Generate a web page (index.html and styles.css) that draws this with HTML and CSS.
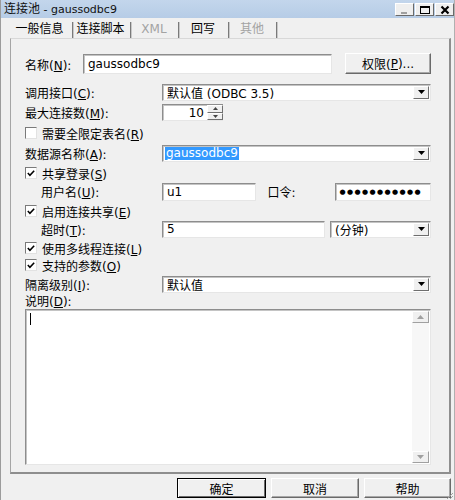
FILE: index.html
```html
<!DOCTYPE html>
<html>
<head>
<meta charset="utf-8">
<link rel="stylesheet" href="styles.css">
</head>
<body>
<div class="win">
  <div class="titlebar">
    <span class="title">连接池<span class="tl"> - gaussodbc9</span></span>
    <div class="wbtns">
      <span class="wbtn"><svg width="10" height="10" viewBox="0 0 10 10"><rect x="1" y="7" width="6" height="2" fill="#a0a0a0"/></svg></span>
      <span class="wbtn"><svg width="12" height="10" viewBox="0 0 12 10"><rect x="1.5" y="1.5" width="9" height="7" fill="none" stroke="#000" stroke-width="1"/><rect x="1" y="1" width="10" height="2" fill="#000"/></svg></span>
      <span class="wbtn"><svg width="10" height="10" viewBox="0 0 10 10"><path d="M1.5 1.5 L8.5 8.5 M8.5 1.5 L1.5 8.5" stroke="#000" stroke-width="2.2"/></svg></span>
    </div>
  </div>
  <div class="tabs">
    <span class="tab t1 sel">一般信息</span>
    <span class="tab t2">连接脚本</span>
    <span class="tab t3 dis">XML</span>
    <span class="tab t4">回写</span>
    <span class="tab t5 dis">其他</span>
  </div>
  <div class="panel">
    <div class="row r1">
      <span class="lbl lbl-short">名称(<u>N</u>):</span>
      <div class="field f-name">gaussodbc9</div>
      <div class="btn b-perm">权限(<u>P</u>)...</div>
    </div>
    <div class="row r2">
      <span class="lbl">调用接口(<u>C</u>):</span>
      <div class="field sel-box f-wide"><span class="val">默认值 (ODBC 3.5)</span><span class="dd"><svg width="7" height="4" viewBox="0 0 7 4"><path d="M0 0 H7 L3.5 4 Z" fill="#000"/></svg></span></div>
    </div>
    <div class="row r3">
      <span class="lbl">最大连接数(<u>M</u>):</span>
      <div class="spin">
        <div class="field f-spin">10</div>
        <div class="spin-btns">
          <span class="sbtn"><svg width="5" height="3" viewBox="0 0 5 3"><path d="M0 3 H5 L2.5 0 Z" fill="#444"/></svg></span>
          <span class="sbtn"><svg width="5" height="3" viewBox="0 0 5 3"><path d="M0 0 H5 L2.5 3 Z" fill="#444"/></svg></span>
        </div>
      </div>
    </div>
    <div class="row r4 chk-row">
      <span class="cb"></span><span class="ctext">需要全限定表名(<u>R</u>)</span>
    </div>
    <div class="row r5">
      <span class="lbl">数据源名称(<u>A</u>):</span>
      <div class="field sel-box f-wide"><span class="val"><span class="hl">gaussodbc9</span></span><span class="dd"><svg width="7" height="4" viewBox="0 0 7 4"><path d="M0 0 H7 L3.5 4 Z" fill="#000"/></svg></span></div>
    </div>
    <div class="row r6 chk-row">
      <span class="cb"><svg width="11" height="11" viewBox="0 0 11 11"><path d="M2 5 L4.3 7.5 L9 2.5" fill="none" stroke="#000" stroke-width="1.7"/></svg></span><span class="ctext">共享登录(<u>S</u>)</span>
    </div>
    <div class="row r7">
      <span class="lbl lbl-ind">用户名(<u>U</u>):</span>
      <div class="field f-user">u1</div>
      <span class="lbl-pw">口令:</span>
      <div class="field f-pw"><span class="dots">●●●●●●●●●●●</span></div>
    </div>
    <div class="row r8 chk-row">
      <span class="cb"><svg width="11" height="11" viewBox="0 0 11 11"><path d="M2 5 L4.3 7.5 L9 2.5" fill="none" stroke="#000" stroke-width="1.7"/></svg></span><span class="ctext">启用连接共享(<u>E</u>)</span>
    </div>
    <div class="row r9">
      <span class="lbl lbl-ind">超时(<u>T</u>):</span>
      <div class="field f-timeout">5</div>
      <div class="field sel-box f-unit"><span class="val">(分钟)</span><span class="dd"><svg width="7" height="4" viewBox="0 0 7 4"><path d="M0 0 H7 L3.5 4 Z" fill="#000"/></svg></span></div>
    </div>
    <div class="row r10 chk-row">
      <span class="cb"><svg width="11" height="11" viewBox="0 0 11 11"><path d="M2 5 L4.3 7.5 L9 2.5" fill="none" stroke="#000" stroke-width="1.7"/></svg></span><span class="ctext">使用多线程连接(<u>L</u>)</span>
    </div>
    <div class="row r11 chk-row">
      <span class="cb"><svg width="11" height="11" viewBox="0 0 11 11"><path d="M2 5 L4.3 7.5 L9 2.5" fill="none" stroke="#000" stroke-width="1.7"/></svg></span><span class="ctext">支持的参数(<u>O</u>)</span>
    </div>
    <div class="row r12">
      <span class="lbl">隔离级别(<u>I</u>):</span>
      <div class="field sel-box f-wide"><span class="val">默认值</span><span class="dd"><svg width="7" height="4" viewBox="0 0 7 4"><path d="M0 0 H7 L3.5 4 Z" fill="#000"/></svg></span></div>
    </div>
    <div class="row r13">
      <span class="lbl">说明(<u>D</u>):</span>
    </div>
    <div class="memo">
      <div class="memo-text"><span class="caret"></span></div>
      <div class="vsb">
        <span class="vbtn"><svg width="7" height="4" viewBox="0 0 7 4"><path d="M0 4 H7 L3.5 0 Z" fill="#a0a0a0"/></svg></span>
        <span class="vtrack"></span>
        <span class="vbtn"><svg width="7" height="4" viewBox="0 0 7 4"><path d="M0 0 H7 L3.5 4 Z" fill="#a0a0a0"/></svg></span>
      </div>
    </div>
  </div>
  <div class="footer">
    <div class="btn fb def">确定</div>
    <div class="btn fb b2">取消</div>
    <div class="btn fb b3">帮助</div>
  </div>
  <svg class="grip" width="10" height="10" viewBox="0 0 10 10"><path d="M9 3 L3 9 M9 6 L6 9" stroke="#a0a0a0" stroke-width="1"/></svg>
</div>
</body>
</html>
```

FILE: styles.css
```css
html, body {
  margin: 0;
  padding: 0;
  background: #f0f0f0;
}
.win {
  width: 455px;
  height: 500px;
  box-sizing: border-box;
  background: #f0f0f0;
  border-left: 1px solid #9c9c9c;
  border-right: 1px solid #b0b0b0;
  position: relative;
  overflow: hidden;
  font-family: "DejaVu Sans", "Noto Sans CJK SC", sans-serif;
  font-size: 12px;
  color: #000;
}
u { text-decoration: underline; text-underline-offset: 1px; }

.titlebar {
  height: 18px;
  background: linear-gradient(#c3d6ec, #b6cce6);
  display: flex;
  align-items: center;
  justify-content: space-between;
  margin-left: -1px;
  margin-right: -1px;
}
.title {
  padding-left: 4px;
  font-size: 12px;
  line-height: 18px;
  color: #111;
  white-space: nowrap;
}
.tl { font-size: 11px; }
.wbtns {
  display: flex;
  gap: 1px;
  padding-right: 1px;
  align-self: flex-start;
  margin-top: 3px;
}
.wbtn {
  width: 19px;
  height: 13px;
  box-sizing: border-box;
  background: #efefef;
  border-top: 1px solid #fff;
  border-left: 1px solid #fff;
  border-right: 1px solid #6a6a6a;
  border-bottom: 1px solid #6a6a6a;
  display: flex;
  align-items: center;
  justify-content: center;
}

.tabs {
  height: 20px;
  display: flex;
  align-items: flex-end;
  padding-left: 9px;
}
.tab {
  height: 16px;
  box-sizing: border-box;
  line-height: 15px;
  text-align: center;
  border-right: 1px solid #7a7a7a;
  box-shadow: 1px 0 0 #c8c8c8;
  padding-right: 3px;
  font-size: 12px;
}
.t1 { width: 63px; }
.t2 { width: 57px; margin-left: 1px; }
.t3 { width: 46px; margin-left: 2px; }
.t4 { width: 48px; margin-left: 2px; }
.t5 { width: 46px; margin-left: 2px; }
.tab.dis { color: #a3a3a3; }

.panel {
  margin-left: 9px;
  width: 441px;
  height: 436px;
  box-sizing: border-box;
  border-left: 1px solid #a5a5a5;
  border-top: 1px solid #d8d8d8;
  border-right: 2px solid #8e8e8e;
  border-bottom: 2px solid #8e8e8e;
  padding: 0 18px 0 14px;
}
.row {
  display: flex;
  align-items: center;
}
.r1 { margin-top: 14px; height: 22px; }
.r2 { margin-top: 8px; height: 18px; }
.r3 { margin-top: 2px; height: 19px; }
.r4 { margin-top: 3px; height: 16px; }
.r5 { margin-top: 3px; height: 18px; }
.r6 { margin-top: 3px; height: 16px; }
.r7 { margin-top: 1px; height: 19px; }
.r8 { margin-top: 2px; height: 16px; }
.r9 { margin-top: 1px; height: 18px; }
.r10 { margin-top: 2px; height: 16px; }
.r11 { margin-top: 1px; height: 16px; }
.r12 { margin-top: 2px; height: 18px; }
.r13 { margin-top: 0; height: 14px; }

.lbl {
  width: 137px;
  flex: none;
  white-space: nowrap;
}
.lbl-short { width: 58px; }
.lbl-ind { padding-left: 16px; width: 121px; }

.field {
  background: #fff;
  box-sizing: border-box;
  border-top: 1px solid #8d8d8d;
  border-left: 1px solid #8d8d8d;
  border-right: 1px solid #e6e6e6;
  border-bottom: 1px solid #e6e6e6;
  box-shadow: inset 1px 1px 0 #c4c4c4;
  display: flex;
  align-items: center;
  padding-left: 4px;
  white-space: nowrap;
  overflow: hidden;
}
.f-name { width: 249px; height: 20px; }
.f-wide { width: 269px; height: 17px; }
.f-user { width: 94px; height: 18px; }
.f-pw { width: 97px; height: 18px; }
.f-timeout { width: 163px; height: 17px; }
.f-unit { width: 101px; height: 17px; margin-left: 5px; }

.sel-box {
  justify-content: space-between;
  padding-right: 1px;
}
.val { display: flex; align-items: center; }
.hl {
  background: #3399ff;
  color: #fff;
  padding: 0 1px;
  line-height: 13px;
  margin-left: -2px;
}
.dd {
  width: 16px;
  height: 13px;
  box-sizing: border-box;
  background: #f0f0f0;
  border-top: 1px solid #fff;
  border-left: 1px solid #fff;
  border-right: 1px solid #6e6e6e;
  border-bottom: 1px solid #6e6e6e;
  display: flex;
  align-items: center;
  justify-content: center;
  flex: none;
}

.btn {
  box-sizing: border-box;
  background: #f0f0f0;
  border-top: 1px solid #fff;
  border-left: 1px solid #fff;
  border-right: 1px solid #6a6a6a;
  border-bottom: 1px solid #6a6a6a;
  box-shadow: inset -1px -1px 0 #a8a8a8;
  display: flex;
  align-items: center;
  justify-content: center;
  white-space: nowrap;
}
.b-perm {
  width: 86px;
  height: 21px;
  margin-left: auto;
  margin-top: -1px;
}

.spin { display: flex; height: 17px; }
.f-spin {
  width: 45px;
  height: 17px;
  justify-content: flex-end;
  padding-right: 3px;
  border-right: none;
}
.spin-btns {
  display: flex;
  flex-direction: column;
  width: 16px;
  background: #fff;
  border-top: 1px solid #8d8d8d;
  border-bottom: 1px solid #e6e6e6;
  box-sizing: border-box;
  height: 17px;
}
.sbtn {
  flex: 1;
  background: #f0f0f0;
  box-sizing: border-box;
  border-top: 1px solid #fff;
  border-left: 1px solid #fff;
  border-right: 1px solid #707070;
  border-bottom: 1px solid #707070;
  display: flex;
  align-items: center;
  justify-content: center;
}

.chk-row { gap: 0; }
.cb {
  width: 12px;
  height: 12px;
  box-sizing: border-box;
  background: #fff;
  border-top: 1px solid #7a7a7a;
  border-left: 1px solid #7a7a7a;
  border-right: 1px solid #e2e2e2;
  border-bottom: 1px solid #e2e2e2;
  display: flex;
  align-items: center;
  justify-content: center;
  flex: none;
}
.ctext { margin-left: 5px; white-space: nowrap; }

.lbl-pw { margin-left: 12px; width: 67px; flex: none; }
.dots {
  font-size: 7px;
  letter-spacing: 1.4px;
  line-height: 10px;
}

.memo {
  margin-top: 2px;
  height: 156px;
  width: 406px;
  box-sizing: border-box;
  display: flex;
  background: #fff;
  border-top: 1px solid #8d8d8d;
  border-left: 1px solid #8d8d8d;
  border-right: 1px solid #e6e6e6;
  border-bottom: 1px solid #e6e6e6;
  box-shadow: inset 1px 1px 0 #c4c4c4;
}
.memo-text {
  flex: 1;
  padding: 3px 0 0 4px;
}
.caret {
  display: block;
  width: 1px;
  height: 12px;
  background: #000;
}
.vsb {
  width: 17px;
  display: flex;
  flex-direction: column;
  background: #f7f7f7;
  margin: 1px 1px 1px 0;
}
.vbtn {
  height: 12px;
  box-sizing: border-box;
  background: #f0f0f0;
  border-top: 1px solid #fff;
  border-left: 1px solid #fff;
  border-right: 1px solid #a0a0a0;
  border-bottom: 1px solid #a0a0a0;
  display: flex;
  align-items: center;
  justify-content: center;
}
.vtrack { flex: 1; }

.footer {
  display: flex;
  justify-content: flex-end;
  gap: 5px;
  margin-top: 4px;
  padding-right: 3px;
}
.fb { height: 20px; }
.def {
  width: 89px;
  border: 1px solid #000;
  box-shadow: inset 1px 1px 0 #fff, inset -1px -1px 0 #6a6a6a;
}
.b2 { width: 88px; }
.b3 { width: 87px; }
.grip {
  position: absolute;
  right: 0;
  bottom: 0;
}
```
